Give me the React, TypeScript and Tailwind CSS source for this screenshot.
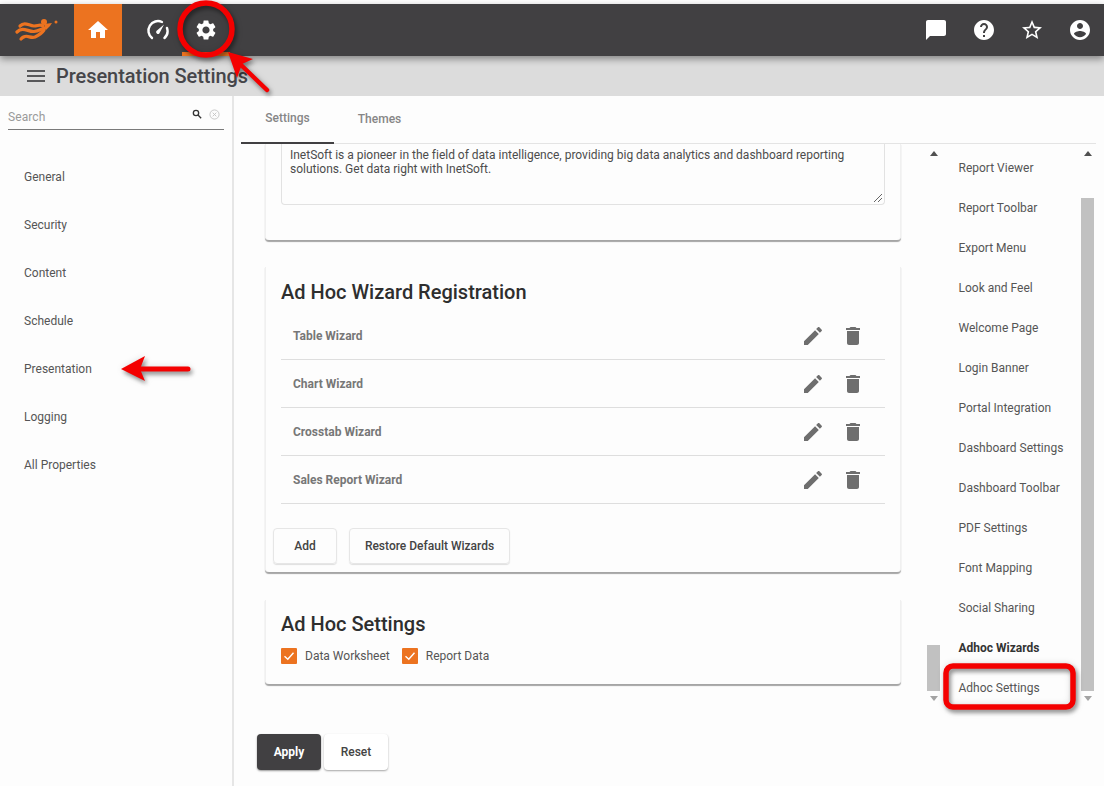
import React from "react";

const P = {
  home: "M10 20v-6h4v6h5v-8h3L12 3 2 12h3v8z",
  gear: "M19.14 12.94c.04-.3.06-.61.06-.94 0-.32-.02-.64-.07-.94l2.03-1.58a.49.49 0 0 0 .12-.61l-1.92-3.32a.488.488 0 0 0-.59-.22l-2.39.96c-.5-.38-1.03-.7-1.62-.94l-.36-2.54a.484.484 0 0 0-.48-.41h-3.84c-.24 0-.43.17-.47.41l-.36 2.54c-.59.24-1.13.57-1.62.94l-2.39-.96c-.22-.08-.47 0-.59.22L2.74 8.87c-.12.21-.08.47.12.61l2.03 1.58c-.05.3-.09.63-.09.94s.02.64.07.94l-2.03 1.58a.49.49 0 0 0-.12.61l1.92 3.32c.12.22.37.29.59.22l2.39-.96c.5.38 1.03.7 1.62.94l.36 2.54c.05.24.24.41.48.41h3.84c.24 0 .44-.17.47-.41l.36-2.54c.59-.24 1.13-.56 1.62-.94l2.39.96c.22.08.47 0 .59-.22l1.92-3.32c.12-.22.07-.47-.12-.61l-2.01-1.58zM12 15.6c-1.98 0-3.6-1.62-3.6-3.6s1.62-3.6 3.6-3.6 3.6 1.62 3.6 3.6-1.62 3.6-3.6 3.6z",
  chat: "M20 2H4c-1.1 0-2 .9-2 2v18l4-4h14c1.1 0 2-.9 2-2V4c0-1.1-.9-2-2-2z",
  help: "M12 2C6.48 2 2 6.48 2 12s4.48 10 10 10 10-4.48 10-10S17.52 2 12 2zm1 17h-2v-2h2v2zm2.07-7.75l-.9.92C13.45 12.9 13 13.5 13 15h-2v-.5c0-1.1.45-2.1 1.17-2.83l1.24-1.26c.37-.36.59-.86.59-1.41 0-1.1-.9-2-2-2s-2 .9-2 2H8c0-2.21 1.79-4 4-4s4 1.79 4 4c0 .88-.36 1.68-.93 2.25z",
  star: "M22 9.24l-7.19-.62L12 2 9.19 8.63 2 9.24l5.46 4.73L5.82 21 12 17.27 18.18 21l-1.63-7.03L22 9.24zM12 15.4l-3.76 2.27 1-4.28-3.32-2.88 4.38-.38L12 6.1l1.71 4.04 4.38.38-3.32 2.88 1 4.28L12 15.4z",
  user: "M12 2C6.48 2 2 6.48 2 12s4.48 10 10 10 10-4.48 10-10S17.52 2 12 2zm0 3c1.66 0 3 1.34 3 3s-1.34 3-3 3-3-1.34-3-3 1.34-3 3-3zm0 14.2c-2.5 0-4.71-1.28-6-3.22.03-1.99 4-3.08 6-3.08 1.99 0 5.97 1.09 6 3.08-1.29 1.94-3.5 3.22-6 3.22z",
  edit: "M3 17.25V21h3.75L17.81 9.94l-3.75-3.75L3 17.25zM20.71 7.04c.39-.39.39-1.02 0-1.41l-2.34-2.34c-.39-.39-1.02-.39-1.41 0l-1.83 1.83 3.75 3.75 1.83-1.83z",
  trash: "M6 19c0 1.1.9 2 2 2h8c1.1 0 2-.9 2-2V7H6v12zM19 4h-3.5l-1-1h-5l-1 1H5v2h14V4z",
};

function Icon({ d, className }: { d: string; className: string }) {
  return (
    <svg viewBox="0 0 24 24" className={className} fill="currentColor">
      <path d={d} />
    </svg>
  );
}

function Logo() {
  return (
    <svg viewBox="0 0 44 24" className="w-[44px] h-[24px]" fill="none">
      <g stroke="#ec7320" strokeWidth="3.2" strokeLinecap="round">
        <path d="M5 8 C10 3 14 8 19 8 C23 8 25 6 28 8" />
        <path d="M2 14 C8 8 13 14 19 13.5 C24 13 26 11 30 10" />
        <path d="M6 21 C11 15 15 21 20 19 C24 17 27 15 29 12" />
      </g>
      <circle cx="29" cy="4" r="3" fill="#ec7320" />
      <path d="M29 6 L37 5 L35 8 L31 12 Z" fill="#ec7320" />
      <circle cx="41" cy="4" r="1.5" fill="#ec7320" />
    </svg>
  );
}

function Gauge() {
  return (
    <svg viewBox="0 0 24 24" className="w-[24px] h-[24px]" fill="none">
      <path d="M6 20 A9.5 9.5 0 0 1 16 4" stroke="#fff" strokeWidth="2.4" strokeLinecap="round" />
      <path d="M21 10 A9.5 9.5 0 0 1 18.5 20" stroke="#fff" strokeWidth="2.4" strokeLinecap="round" />
      <path d="M10.4 13 L18 6.5 L13.3 15.4 A1.9 1.9 0 0 1 10.4 13 Z" fill="#fff" />
    </svg>
  );
}

function Check() {
  return (
    <span className="w-[16px] h-[16px] bg-[#ec7320] flex items-center justify-center rounded-[1px]">
      <svg viewBox="0 0 16 16" className="w-[16px] h-[16px]" fill="none">
        <path d="M3.5 8.2 L6.8 11.2 L12.5 4.8" stroke="#fff" strokeWidth="1.4" />
      </svg>
    </span>
  );
}

const sideItems = ["General", "Security", "Content", "Schedule", "Presentation", "Logging", "All Properties"];
const wizards = ["Table Wizard", "Chart Wizard", "Crosstab Wizard", "Sales Report Wizard"];
const navItems = [
  "Report Viewer", "Report Toolbar", "Export Menu", "Look and Feel", "Welcome Page", "Login Banner",
  "Portal Integration", "Dashboard Settings", "Dashboard Toolbar", "PDF Settings", "Font Mapping",
  "Social Sharing", "Adhoc Wizards", "Adhoc Settings",
];

function Scroll({ top, className }: { top: number; className: string }) {
  return (
    <div className={`w-[13px] h-[557px] flex flex-col items-center ${className}`}>
      <div className="mt-[3px] w-0 h-0 border-x-[4px] border-x-transparent border-b-[5px] border-b-[#505050]" />
      <div className="w-[13px] bg-[#c1c1c1] mb-[5px] flex-none" style={{ marginTop: top, height: 691 - 156 - top }} />
      <div className="w-0 h-0 border-x-[4px] border-x-transparent border-t-[5px] border-t-[#a3a3a3]" />
    </div>
  );
}

const glow = { filter: "drop-shadow(2px 3px 2px rgba(0,0,0,0.4)) drop-shadow(0 0 3px rgba(0,0,0,0.12))" };

export default function App() {
  return (
    <div className="relative w-[1104px] h-[786px] overflow-hidden bg-[#fdfdfd] flex flex-col font-['Roboto',sans-serif] text-[12px] text-[#4a4a4a]">
      <div className="h-[4px] flex-none" />
      <header className="relative z-10 h-[52px] flex-none bg-[#414042] flex items-center shadow-[0_3px_7px_rgba(0,0,0,0.4)] text-white">
        <div className="w-[74px] pl-[15px] flex items-center">
          <Logo />
        </div>
        <div className="w-[48px] h-full bg-[#ec7320] flex items-center justify-center">
          <Icon d={P.home} className="w-[24px] h-[24px]" />
        </div>
        <div className="w-[12px]" />
        <div className="w-[48px] h-full flex items-center justify-center">
          <Gauge />
        </div>
        <div className="w-[48px] h-full flex items-center justify-center border-b-[4px] border-b-[#ec7320] pt-[4px]">
          <Icon d={P.gear} className="w-[24px] h-[24px]" />
        </div>
        <div className="flex-1" />
        <div className="flex items-center">
          {[P.chat, P.help, P.star, P.user].map((d) => (
            <div key={d} className="w-[48px] h-[52px] flex items-center justify-center">
              <Icon d={d} className="w-[24px] h-[24px]" />
            </div>
          ))}
        </div>
      </header>
      <div className="h-[40px] flex-none bg-[#dcdcdc] flex items-center pl-[27px]">
        <div className="w-[18px] h-[12px] flex flex-col justify-between">
          <div className="h-[2px] bg-[#58585a]" />
          <div className="h-[2px] bg-[#58585a]" />
          <div className="h-[2px] bg-[#58585a]" />
        </div>
        <span className="ml-[11px] text-[20px] font-medium text-[#46464a] tracking-[-0.05px]">Presentation Settings</span>
      </div>
      <div className="flex flex-1 min-h-0">
        <aside className="w-[234px] flex-none border-r-2 border-r-[#e6e6e6] flex flex-col">
          <div className="mx-[8px] mt-[11px] h-[23px] border-b border-b-[#7a7a7a] flex items-center">
            <span className="text-[12px] text-[#9a9a9a] flex-1 mb-[3px] tracking-[0.1px]">Search</span>
            <svg viewBox="0 0 12 12" className="w-[10px] h-[10px] mb-[8px]" fill="none" stroke="#333" strokeWidth="1.6">
              <circle cx="4.8" cy="4.8" r="3.2" />
              <path d="M7.2 7.2 L11 11" />
            </svg>
            <svg viewBox="0 0 12 12" className="w-[11px] h-[11px] ml-[7px] mr-[4px] mb-[8px]" fill="none" stroke="#c4c4c4" strokeWidth="1">
              <circle cx="6" cy="6" r="5" />
              <path d="M4 4 L8 8 M8 4 L4 8" />
            </svg>
          </div>
          <nav className="mt-[23px] flex flex-col">
            {sideItems.map((s) => (
              <div key={s} className="h-[48px] flex items-center pl-[24px] text-[#555]">{s}</div>
            ))}
          </nav>
        </aside>
        <main className="flex-1 min-w-0 flex flex-col">
          <div className="h-[48px] flex-none ml-[7px] mr-[8px] border-b border-b-[#e4e4e4] flex">
            <div className="w-[93px] h-[48px] border-b-2 border-b-[#414042] flex items-center justify-center font-medium text-[#868686] pb-[3px]">Settings</div>
            <div className="w-[91px] h-[48px] flex items-center justify-center font-medium text-[#868686] pb-[3px]">Themes</div>
          </div>
          <div className="flex flex-1 min-h-0">
            <div className="w-[667px] flex-none pl-[31px] flex flex-col">
              <section className="h-[96px] flex-none border-x border-x-[#f0f0f0] rounded-b-[4px] shadow-[0_1.5px_1px_rgba(0,0,0,0.35)] px-[15px]">
                <div className="h-[61px] border border-t-0 border-[#e2e2e2] rounded-b-[4px] pl-[8px] pt-[4px] leading-[14px] text-[#4c4c4c] relative tracking-[-0.01px]">
                  InetSoft is a pioneer in the field of data intelligence, providing big data analytics and dashboard reporting<br />
                  solutions. Get data right with InetSoft.
                  <svg viewBox="0 0 8 8" className="absolute right-[2px] bottom-[2px] w-[8px] h-[8px]" stroke="#666" strokeWidth="1">
                    <path d="M0 8 L8 0 M4 8 L8 4" />
                  </svg>
                </div>
              </section>
              <section className="mt-[27px] h-[305px] flex-none border-x border-x-[#f0f0f0] rounded-b-[4px] shadow-[0_1.5px_1px_rgba(0,0,0,0.35)] flex flex-col">
                <h2 className="mx-[15px] h-[45px] flex-none pt-[11px] text-[20px] leading-[28px] font-medium text-[#2e2e2e]">Ad Hoc Wizard Registration</h2>
                <div className="mx-[15px]">
                  {wizards.map((w) => (
                    <div key={w} className="h-[48px] border-b border-b-[#dedede] flex items-center pl-[12px] font-bold text-[#777]">
                      <span className="flex-1">{w}</span>
                      <Icon d={P.edit} className="w-[24px] h-[24px] text-[#6e6e6e]" />
                      <div className="w-[16px]" />
                      <Icon d={P.trash} className="w-[24px] h-[24px] text-[#6e6e6e] mr-[20px]" />
                    </div>
                  ))}
                </div>
                <div className="mt-[24px] ml-[7px] flex gap-[12px]">
                  <button className="w-[64px] h-[36px] border border-[#e6e6e6] rounded-[4px] font-medium text-[#444] shadow-[0_1px_1px_rgba(0,0,0,0.12)]">Add</button>
                  <button className="w-[161px] h-[36px] border border-[#e6e6e6] rounded-[4px] font-medium text-[#444] shadow-[0_1px_1px_rgba(0,0,0,0.12)]">Restore Default Wizards</button>
                </div>
              </section>
              <section className="mt-[28px] h-[84px] flex-none border-x border-x-[#f0f0f0] rounded-b-[4px] shadow-[0_1.5px_1px_rgba(0,0,0,0.35)] px-[15px]">
                <h2 className="h-[40px] pt-[10px] text-[20px] leading-[28px] font-medium text-[#2e2e2e]">Ad Hoc Settings</h2>
                <div className="flex items-center mt-[7px] text-[#555]">
                  <Check />
                  <span className="ml-[8px]">Data Worksheet</span>
                  <span className="w-[12px]" />
                  <Check />
                  <span className="ml-[8px]">Report Data</span>
                </div>
              </section>
              <div className="mt-[50px] -ml-[8px] flex gap-[3px]">
                <button className="w-[64px] h-[36px] bg-[#414042] rounded-[4px] font-bold text-white shadow-[0_1px_2px_rgba(0,0,0,0.4)]">Apply</button>
                <button className="w-[64px] h-[36px] bg-white rounded-[4px] font-medium text-[#444] shadow-[0_1px_2px_rgba(0,0,0,0.35)]">Reset</button>
              </div>
            </div>
            <div className="flex-1 flex pt-[4px]">
              <Scroll top={489} className="ml-[26px]" />
              <div className="w-[141px] ml-[18px] pl-[0.5px] flex flex-col">
                {navItems.map((n) => (
                  <div key={n} className={`h-[40px] flex-none flex items-center ${n === "Adhoc Wizards" ? "font-bold text-[#333]" : "text-[#555]"}`}>{n}</div>
                ))}
              </div>
              <Scroll top={42} className="ml-[-18px]" />
            </div>
          </div>
        </main>
      </div>

      {/* annotations */}
      <svg className="absolute left-0 top-0 w-[1104px] h-[786px] z-20 pointer-events-none" viewBox="0 0 1104 786" fill="none">
        <g style={glow}>
          <circle cx="206" cy="29" r="26" stroke="#f40000" strokeWidth="5.5" />
          <path d="M267 90 L240 64" stroke="#f40000" strokeWidth="4.5" strokeLinecap="round" />
          <path d="M228 52 L253 59 L242 64 L237 78 Z" fill="#f40000" />
        </g>
        <g style={glow}>
          <path d="M188 369 L136 369" stroke="#f40000" strokeWidth="5" strokeLinecap="round" />
          <path d="M121 369 L145 356 L140 369 L145 381 Z" fill="#f40000" />
        </g>
        <g style={glow}>
          <rect x="946" y="666" width="127" height="41" rx="7" stroke="#f40000" strokeWidth="5.5" />
        </g>
      </svg>
    </div>
  );
}
